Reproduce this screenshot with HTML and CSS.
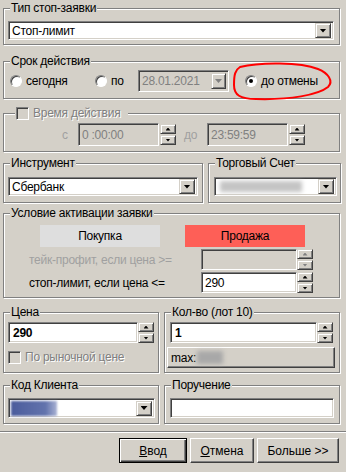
FILE: index.html
```html
<!DOCTYPE html>
<html lang="ru">
<head>
    <meta charset="UTF-8">
    <title>Стоп-заявка</title>
    <link rel="stylesheet" href="styles.css">
</head>
<body>
    <div class="dialog">
        <div class="group g-type">
            <span class="group-title">Тип стоп-заявки</span>
            <div class="combo combo-type">
                <span class="combo-text">Стоп-лимит</span>
                <span class="drop-btn"><i class="arrow"></i></span>
            </div>
        </div>

        <div class="group g-period">
            <span class="group-title">Срок действия</span>
            <div class="period-row">
                <label class="opt opt-today"><span class="radio"></span>сегодня</label>
                <label class="opt opt-until"><span class="radio"></span>по</label>
                <div class="field field-off date">
                    <span class="field-text">28.01.2021</span>
                    <span class="drop-btn small"><i class="arrow off"></i></span>
                </div>
                <label class="opt opt-cancel"><span class="radio checked"></span>до отмены</label>
            </div>
        </div>

        <div class="group g-time">
            <span class="group-title title-check"><span class="check off"></span><span class="embossed">Время действия</span></span>
            <div class="time-row">
                <span class="time-label lbl-from">с</span>
                <div class="field field-off time"><span class="field-text">0 :00:00</span></div>
                <div class="spin">
                    <span class="spin-btn"><i class="arrow up tiny"></i></span>
                    <span class="spin-btn"><i class="arrow tiny"></i></span>
                </div>
                <span class="time-label lbl-to">до</span>
                <div class="field field-off time"><span class="field-text">23:59:59</span></div>
                <div class="spin">
                    <span class="spin-btn"><i class="arrow up tiny"></i></span>
                    <span class="spin-btn"><i class="arrow tiny"></i></span>
                </div>
            </div>
        </div>

        <div class="row row-instr">
            <div class="group g-instr">
                <span class="group-title">Инструмент</span>
                <div class="combo combo-instr">
                    <span class="combo-text">Сбербанк</span>
                    <span class="drop-btn"><i class="arrow"></i></span>
                </div>
            </div>
            <div class="group g-account">
                <span class="group-title">Торговый Счет</span>
                <div class="combo combo-account">
                    <span class="combo-text"><span class="blur-gray"></span></span>
                    <span class="drop-btn"><i class="arrow"></i></span>
                </div>
            </div>
        </div>

        <div class="group g-cond">
            <span class="group-title">Условие активации заявки</span>
            <div class="side-row">
                <span class="side-btn buy">Покупка</span>
                <span class="side-btn sell">Продажа</span>
            </div>
            <div class="cond-row">
                <span class="cond-label muted">тейк-профит, если цена &gt;=</span>
                <div class="field field-off cond-field"></div>
                <div class="spin">
                    <span class="spin-btn"><i class="arrow up tiny off"></i></span>
                    <span class="spin-btn"><i class="arrow tiny off"></i></span>
                </div>
            </div>
            <div class="cond-row">
                <span class="cond-label">стоп-лимит, если цена &lt;=</span>
                <div class="field cond-field"><span class="field-text">290</span></div>
                <div class="spin">
                    <span class="spin-btn"><i class="arrow up tiny"></i></span>
                    <span class="spin-btn"><i class="arrow tiny"></i></span>
                </div>
            </div>
        </div>

        <div class="row row-price">
            <div class="group g-price">
                <span class="group-title">Цена</span>
                <div class="num-row">
                    <div class="field price-field"><span class="field-text bold">290</span></div>
                    <div class="spin">
                        <span class="spin-btn"><i class="arrow up tiny"></i></span>
                        <span class="spin-btn"><i class="arrow tiny"></i></span>
                    </div>
                </div>
                <label class="market"><span class="check off"></span><span class="embossed">По рыночной цене</span></label>
            </div>
            <div class="group g-qty">
                <span class="group-title">Кол-во (лот 10)</span>
                <div class="num-row qty-row">
                    <div class="field qty-field"><span class="field-text bold">1</span></div>
                    <div class="spin">
                        <span class="spin-btn"><i class="arrow up tiny"></i></span>
                        <span class="spin-btn"><i class="arrow tiny"></i></span>
                    </div>
                </div>
                <div class="max-btn">max:<span class="blur-gray short"></span></div>
            </div>
        </div>

        <div class="row row-client">
            <div class="group g-client">
                <span class="group-title">Код Клиента</span>
                <div class="combo combo-client">
                    <span class="combo-text"><span class="blur-blue"></span></span>
                    <span class="drop-btn"><i class="arrow"></i></span>
                </div>
            </div>
            <div class="group g-order">
                <span class="group-title">Поручение</span>
                <div class="field order-field"></div>
            </div>
        </div>

        <div class="separator"></div>

        <div class="actions">
            <button class="btn btn-default"><u>В</u>вод</button>
            <button class="btn btn-cancel"><u>О</u>тмена</button>
            <button class="btn btn-more">Больше &gt;&gt;</button>
        </div>
    </div>

    <svg class="mark" width="104" height="42" viewBox="0 0 104 42">
        <path d="M8 5 C28 0, 68 0, 86 7 C96 11, 102 19, 96 25 C86 33, 58 38, 24 37 C8 37, 2 33, 2 23 C2 13, 3 8, 8 5 Z" fill="none" stroke="#ff0000" stroke-width="2"/>
    </svg>
</body>
</html>
```

FILE: styles.css
```css
:root {
    --face: #d4d0c8;
    --shadow: #808080;
    --dark: #404040;
    --light: #ffffff;
}

* {
    box-sizing: border-box;
}

body {
    margin: 0;
    width: 346px;
    height: 472px;
    overflow: hidden;
    position: relative;
    background: var(--face);
    color: #000;
    font-family: "Liberation Sans", Arial, sans-serif;
    font-size: 12px;
    letter-spacing: -0.25px;
}

.dialog {
    padding: 8px 0 0 3px;
}

.row {
    display: flex;
}

/* etched group box */
.group {
    position: relative;
    border: 1px solid var(--shadow);
    box-shadow: 1px 1px 0 var(--light), inset 1px 1px 0 var(--light);
}

.group-title {
    position: absolute;
    top: -8px;
    left: 6px;
    padding: 0 1px;
    line-height: 14px;
    background: var(--face);
    white-space: nowrap;
}

.title-check {
    display: flex;
    align-items: center;
    left: 11px;
    width: 113px;
    gap: 4px;
}

.embossed {
    color: var(--shadow);
    text-shadow: 1px 1px 0 var(--light);
}

/* sunken fields */
.field,
.combo {
    display: flex;
    align-items: center;
    background: #fff;
    border: 1px solid;
    border-color: var(--shadow) var(--light) var(--light) var(--shadow);
    box-shadow: inset 1px 1px 0 var(--dark), inset -1px -1px 0 var(--face);
}

.field-off {
    background: var(--face);
    color: var(--shadow);
}

.combo {
    height: 19px;
    padding: 2px;
}

.combo-text {
    flex: 1;
    padding-left: 1px;
    display: flex;
    align-items: center;
    height: 100%;
}

.field-text {
    padding-left: 3px;
}

.bold {
    font-weight: 700;
}

/* raised buttons */
.drop-btn,
.spin-btn {
    display: flex;
    align-items: center;
    justify-content: center;
    background: var(--face);
    border: 1px solid;
    border-color: var(--face) var(--dark) var(--dark) var(--face);
    box-shadow: inset 1px 1px 0 var(--light), inset -1px -1px 0 var(--shadow);
}

.drop-btn {
    width: 16px;
    height: 15px;
}

.arrow {
    display: block;
    width: 7px;
    height: 4px;
    background: #000;
    clip-path: polygon(0 0, 100% 0, 50% 100%);
}

.arrow.up {
    clip-path: polygon(50% 0, 100% 100%, 0 100%);
}

.arrow.tiny {
    width: 5px;
    height: 3px;
}

.arrow.off {
    background: var(--shadow);
}

.spin {
    display: flex;
    flex-direction: column;
    gap: 1px;
    width: 16px;
}

.spin-btn {
    height: 10px;
}

/* type */
.g-type {
    width: 337px;
    height: 37px;
    padding: 12px 0 0 4px;
}

.combo-type {
    width: 326px;
}

/* period */
.g-period {
    width: 337px;
    height: 38px;
    margin-top: 16px;
    padding: 8px 0 0 6px;
}

.period-row {
    display: flex;
    align-items: center;
    height: 22px;
}

.opt {
    display: flex;
    align-items: center;
    gap: 4px;
}

.opt-today {
    width: 85px;
}

.opt-until {
    width: 43px;
}

.opt-cancel {
    margin-left: 16px;
}

.radio {
    width: 12px;
    height: 12px;
    border-radius: 50%;
    background: #fff;
    border: 1px solid;
    border-color: var(--shadow) var(--light) var(--light) var(--shadow);
    box-shadow: inset 1px 1px 0 var(--dark);
    display: flex;
    align-items: center;
    justify-content: center;
}

.radio.checked::after {
    content: "";
    width: 4px;
    height: 4px;
    border-radius: 50%;
    background: #000;
}

.date {
    width: 91px;
    height: 22px;
    padding: 2px;
}

.date .field-text {
    flex: 1;
    padding-left: 1px;
}

.drop-btn.small {
    width: 15px;
    height: 16px;
}

/* time */
.g-time {
    width: 337px;
    height: 39px;
    margin-top: 14px;
    padding: 9px 0 0 58px;
}

.check {
    width: 13px;
    height: 13px;
    background: #fff;
    border: 1px solid;
    border-color: var(--shadow) var(--light) var(--light) var(--shadow);
    box-shadow: inset 1px 1px 0 var(--dark), inset -1px -1px 0 var(--face);
}

.check.off {
    background: var(--face);
}

.time-row {
    display: flex;
    align-items: center;
    height: 23px;
}

.time-label {
    color: #a0a0a0;
}

.lbl-from {
    width: 16px;
}

.lbl-to {
    width: 23px;
    margin-left: 8px;
}

.time {
    width: 81px;
    height: 23px;
    margin-right: 1px;
}

/* instrument + account */
.row-instr {
    margin-top: 11px;
}

.g-instr {
    width: 200px;
    height: 40px;
    padding: 13px 0 0 4px;
}

.combo-instr {
    width: 190px;
}

.g-account {
    width: 133px;
    height: 40px;
    margin-left: 5px;
    padding: 13px 0 0 5px;
}

.combo-account {
    width: 123px;
}

.blur-gray {
    display: block;
    width: 82px;
    height: 11px;
    margin-left: 2px;
    background: #c4c4c4;
    filter: blur(2px);
}

.blur-gray.short {
    display: inline-block;
    width: 26px;
    height: 13px;
    margin-left: 1px;
    background: #a8a8a8;
}

.blur-blue {
    display: block;
    width: 46px;
    height: 15px;
    background: linear-gradient(to right, #4b5c9c, #6273ad 75%, #aab3d4);
    filter: blur(1px);
}

/* activation condition */
.g-cond {
    width: 337px;
    height: 85px;
    margin-top: 10px;
    padding: 11px 0 0 36px;
}

.side-row {
    display: flex;
    gap: 25px;
}

.side-btn {
    display: flex;
    align-items: center;
    justify-content: center;
    width: 120px;
    height: 22px;
}

.buy {
    background: #dedede;
}

.sell {
    background: #fe5f57;
}

.cond-row {
    display: flex;
    align-items: center;
    margin: 2px 0 0 -11px;
}

.cond-label {
    width: 172px;
}

.muted {
    color: #a0a0a0;
}

.cond-field {
    width: 96px;
    height: 21px;
}

/* price + quantity */
.row-price {
    margin-top: 14px;
}

.g-price {
    width: 156px;
    height: 61px;
    padding: 9px 0 0 4px;
}

.num-row {
    display: flex;
    align-items: center;
}

.price-field {
    width: 130px;
    height: 21px;
}

.price-field .field-text,
.qty-field .field-text {
    padding-left: 4px;
}

.market {
    display: flex;
    align-items: center;
    gap: 4px;
    margin-top: 7px;
}

.g-qty {
    width: 176px;
    height: 61px;
    margin-left: 5px;
    padding: 9px 0 0 2px;
}

.qty-row {
    margin-left: 3px;
}

.qty-field {
    width: 147px;
    height: 21px;
}

.max-btn {
    display: flex;
    align-items: center;
    width: 168px;
    height: 21px;
    margin-top: 4px;
    padding-left: 3px;
    background: var(--face);
    border: 1px solid;
    border-color: var(--light) var(--dark) var(--dark) var(--light);
    box-shadow: inset -1px -1px 0 var(--shadow);
}

/* client + order */
.row-client {
    margin-top: 12px;
}

.g-client {
    width: 156px;
    height: 39px;
    padding: 12px 0 0 4px;
}

.combo-client {
    width: 147px;
    height: 20px;
}

.combo-client .combo-text {
    padding-left: 0;
}

.g-order {
    width: 176px;
    height: 39px;
    margin-left: 5px;
    padding: 12px 0 0 5px;
}

.order-field {
    width: 164px;
    height: 20px;
}

.separator {
    width: 346px;
    height: 2px;
    margin: 7px 0 0 -3px;
    border-top: 1px solid var(--shadow);
    border-bottom: 1px solid var(--light);
}

.actions {
    display: flex;
    justify-content: flex-end;
    gap: 3px;
    margin-top: 5px;
    padding-right: 7px;
}

.btn {
    height: 25px;
    padding: 0;
    font: inherit;
    color: #000;
    background: var(--face);
    border: 1px solid;
    border-color: var(--light) var(--dark) var(--dark) var(--light);
    box-shadow: inset -1px -1px 0 var(--shadow);
}

.btn-default {
    width: 68px;
    border-color: #000;
    box-shadow: inset 1px 1px 0 var(--light), inset -1px -1px 0 var(--dark), inset -2px -2px 0 var(--shadow);
}

.btn-cancel {
    width: 64px;
}

.btn-more {
    width: 82px;
}

/* red hand-drawn mark over the "до отмены" option */
.mark {
    position: absolute;
    left: 232px;
    top: 62px;
    pointer-events: none;
}
```
